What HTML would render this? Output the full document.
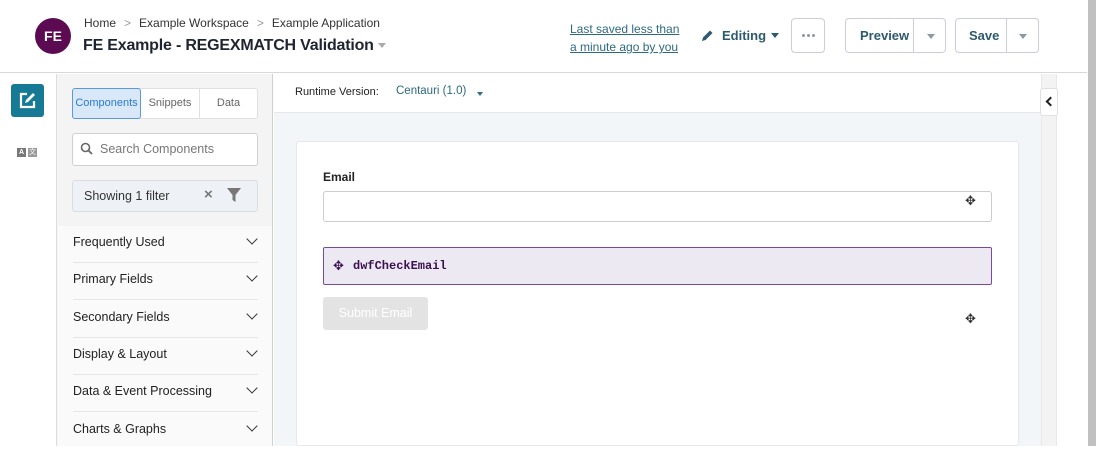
<!DOCTYPE html>
<html><head><style>
*{box-sizing:border-box;margin:0;padding:0}
body{width:1099px;height:446px;overflow:hidden;background:#fff;font-family:"Liberation Sans",sans-serif;color:#222;position:relative}
.abs{position:absolute}
.hdr{left:0;top:0;width:1087px;height:73px;border-bottom:1px solid #d8d8d8;background:#fff}
.av{left:35px;top:18px;width:36px;height:36px;border-radius:50%;background:#5c0a52;color:#fff;font-weight:bold;font-size:14px;text-align:center;line-height:36px}
.bc{left:84px;top:16px;font-size:12px;color:#333}
.bc span{color:#999;margin:0 8px}
.title{left:83px;top:37px;font-size:16px;font-weight:bold;color:#1e2430;letter-spacing:-0.2px}
.btn{border:1px solid #ccd;border-radius:4px;height:35px;top:18px;font-size:13px;font-weight:bold;color:#2d5a6e;background:#fff}
.dd{border-left:1px solid #ccd;position:absolute;top:0;height:33px}
.tri{width:0;height:0;border-left:4.5px solid transparent;border-right:4.5px solid transparent;border-top:5px solid #8a9aa3;position:absolute}
.rail{left:0;top:74px;width:57px;height:372px;border-right:1px solid #ddd;background:#fff}
.panel{left:57px;top:74px;width:216px;height:372px;background:#f4f4f4;border-right:1px solid #d0d0d0}
.tabs{left:72px;top:88px;width:186px;height:31px;border:1px solid #e0e0e0;border-radius:3px;background:#fff;font-size:11px;color:#666}
.list{left:58px;top:226px;width:214px;height:220px;background:#fafafa}
.item{position:absolute;left:15px;width:185px;height:37px;border-bottom:1px solid #e6e6e6;font-size:12.5px;color:#222;line-height:32px}
.chev{position:absolute;right:2px;top:9px;width:8px;height:8px;border-right:1.3px solid #333;border-bottom:1.3px solid #333;transform:rotate(45deg)}
.move{font-size:13px;color:#333}
.dot{position:absolute;top:15px;width:3px;height:3px;border-radius:50%;background:#8a9aa3}
</style></head><body>
<div class="abs hdr"></div>
<div class="abs av">FE</div>
<div class="abs bc">Home<span>&gt;</span>Example Workspace<span>&gt;</span>Example Application</div>
<div class="abs title">FE Example - REGEXMATCH Validation <span style="display:inline-block;width:0;height:0;border-left:4.5px solid transparent;border-right:4.5px solid transparent;border-top:5px solid #aaa;vertical-align:middle"></span></div>
<div class="abs" style="left:570px;top:20px;font-size:12px;color:#2d6a80;text-decoration:underline;line-height:18px">Last saved less than<br>a minute ago by you</div>
<svg class="abs" style="left:701px;top:29px" width="13" height="13" viewBox="0 0 13 13"><path d="M1 12l1-3.5 7-7 2.5 2.5-7 7z" fill="#2d5a6e"/></svg>
<div class="abs" style="left:722px;top:28px;font-size:13px;font-weight:bold;color:#2d5a6e">Editing</div>
<div class="tri" style="left:771px;top:33px;border-top-color:#2d5a6e"></div>
<div class="abs btn" style="left:791px;width:34px"><div class="dot" style="left:10px"></div><div class="dot" style="left:15px"></div><div class="dot" style="left:20px"></div></div>
<div class="abs btn" style="left:845px;width:101px"><span style="position:absolute;left:14px;top:9px">Preview</span><div class="dd" style="left:67px"></div><div class="tri" style="left:81px;top:15px"></div></div>
<div class="abs btn" style="left:955px;width:84px"><span style="position:absolute;left:13px;top:9px">Save</span><div class="dd" style="left:50px"></div><div class="tri" style="left:63px;top:15px"></div></div>
<div class="abs" style="left:1088px;top:0;width:8px;height:446px;background:#c0c0c0"></div>

<div class="abs rail"></div>
<div class="abs" style="left:11px;top:84px;width:33px;height:33px;background:#177a94;border-radius:3px"></div>
<svg class="abs" style="left:18px;top:91px" width="19" height="19" viewBox="0 0 19 19"><path d="M9 3H3v13h13v-6" stroke="#fff" stroke-width="2.2" fill="none"/><path d="M7 12l1-3 7-7 2 2-7 7z" fill="#fff"/></svg>
<div class="abs" style="left:17px;top:148px;width:9px;height:9px;background:#777;color:#fff;font-size:7px;text-align:center;line-height:9px;font-weight:bold">A</div>
<div class="abs" style="left:28px;top:148px;width:9px;height:9px;background:#999;color:#fff;font-size:7px;text-align:center;line-height:9px">文</div>

<div class="abs panel"></div>
<div class="abs tabs">
<div style="position:absolute;left:-1px;top:-1px;width:69px;height:31px;background:#d8e8f8;border:1px solid #5a9ad8;border-radius:3px;color:#2a7ad0;text-align:center;line-height:29px">Components</div>
<div style="position:absolute;left:68px;top:0;width:59px;height:29px;text-align:center;line-height:29px;border-right:1px solid #e0e0e0">Snippets</div>
<div style="position:absolute;left:127px;top:0;width:57px;height:29px;text-align:center;line-height:29px">Data</div>
</div>
<div class="abs" style="left:72px;top:133px;width:186px;height:33px;border:1px solid #d0d0d0;border-radius:3px;background:#fff;font-size:12.5px;color:#777;line-height:31px;padding-left:27px">Search Components</div>
<svg class="abs" style="left:80px;top:142px" width="13" height="13" viewBox="0 0 13 13"><circle cx="5.5" cy="5.5" r="4" stroke="#666" stroke-width="1.6" fill="none"/><path d="M8.5 8.5l3.5 3.5" stroke="#666" stroke-width="1.8"/></svg>
<div class="abs" style="left:72px;top:180px;width:186px;height:32px;border:1px solid #d8dde2;border-radius:3px;background:#eef2f6;font-size:12.5px;color:#333;line-height:30px;padding-left:11px">Showing 1 filter</div>
<div class="abs" style="left:204px;top:186px;font-size:15px;color:#777;font-weight:bold">×</div>
<svg class="abs" style="left:227px;top:188px" width="14" height="14" viewBox="0 0 14 14"><path d="M0 0h14L8.5 7v7l-3-2V7z" fill="#777"/></svg>
<div class="abs list">
<div class="item" style="top:0">Frequently Used<div class="chev"></div></div>
<div class="item" style="top:37px">Primary Fields<div class="chev"></div></div>
<div class="item" style="top:75px">Secondary Fields<div class="chev"></div></div>
<div class="item" style="top:112px">Display &amp; Layout<div class="chev"></div></div>
<div class="item" style="top:149px">Data &amp; Event Processing<div class="chev"></div></div>
<div class="item" style="top:187px;border:none">Charts &amp; Graphs<div class="chev"></div></div>
</div>

<div class="abs" style="left:274px;top:74px;width:767px;height:39px;background:#fff;border-bottom:1px solid #e4e8ec"></div>
<div class="abs" style="left:295px;top:86px;font-size:11px;color:#222">Runtime Version:</div>
<div class="abs" style="left:396px;top:85px;font-size:11.5px;color:#2d6a80">Centauri (1.0)</div>
<div class="tri" style="left:477px;top:92px;border-left-width:3px;border-right-width:3px;border-top:4px solid #2d6a80"></div>
<div class="abs" style="left:274px;top:113px;width:767px;height:333px;background:#f3f6f9"></div>
<div class="abs" style="left:1041px;top:74px;width:16px;height:372px;background:#f3f3f3;border-left:1px solid #e8e8e8;border-right:1px solid #e8e8e8"></div>
<div class="abs" style="left:1040px;top:88px;width:18px;height:28px;background:#fff;border:1px solid #e0e0e0;border-radius:3px"></div>
<div class="abs" style="left:1047px;top:98px;width:7px;height:7px;border-left:2px solid #222;border-bottom:2px solid #222;transform:rotate(45deg)"></div>
<div class="abs" style="left:296px;top:141px;width:723px;height:305px;background:#fff;border:1px solid #e6e8ea;border-radius:3px"></div>
<div class="abs" style="left:323px;top:170px;font-size:12px;font-weight:bold;color:#222">Email</div>
<div class="abs" style="left:323px;top:191px;width:669px;height:31px;border:1px solid #ccc;border-radius:3px"></div>
<div class="abs move" style="left:965px;top:193px">✥</div>
<div class="abs" style="left:323px;top:247px;width:669px;height:38px;border:1px solid #7a4a9a;border-radius:2px;background:#ede9f2"></div>
<div class="abs move" style="left:333px;top:258px;color:#3a1050">✥</div>
<div class="abs" style="left:353px;top:259px;font-family:'Liberation Mono',monospace;font-size:12px;font-weight:bold;color:#3a1050">dwfCheckEmail</div>
<div class="abs" style="left:323px;top:297px;width:105px;height:33px;background:#e3e3e3;border-radius:3px;color:#fff;font-size:12.5px;text-align:center;line-height:33px">Submit Email</div>
<div class="abs move" style="left:965px;top:311px">✥</div>
</body></html>
